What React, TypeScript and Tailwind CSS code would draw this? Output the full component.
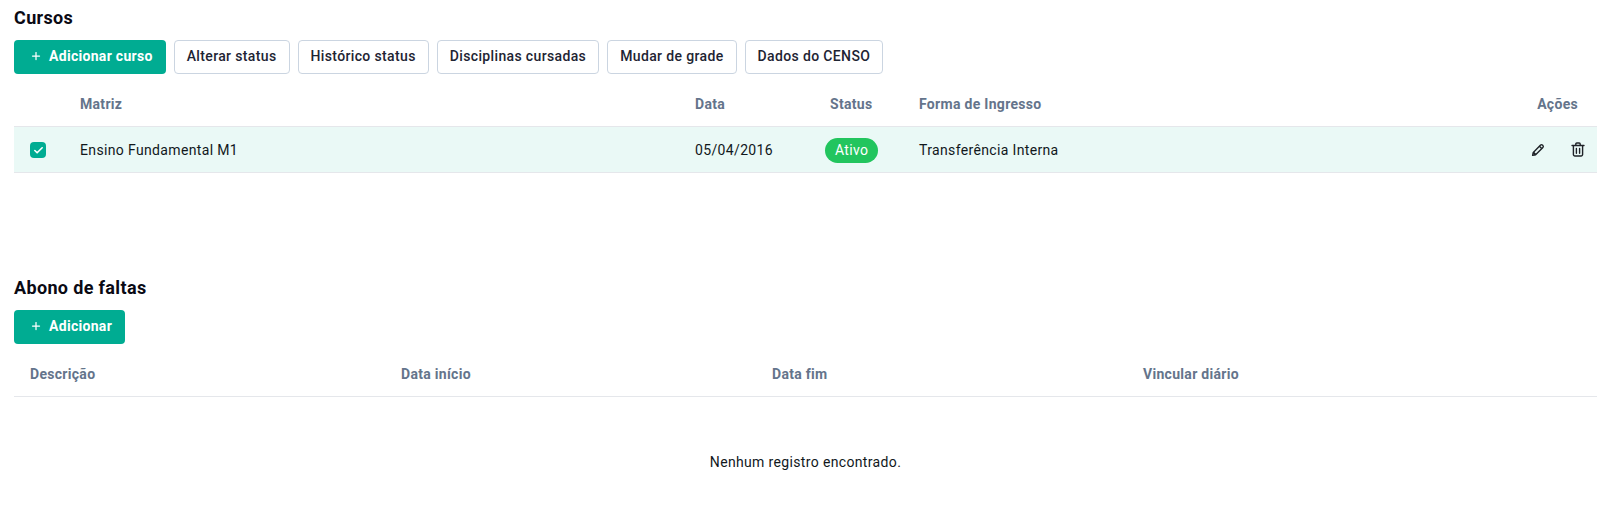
import { Check, Plus } from "lucide-react";

const actions = ["Alterar status", "Histórico status", "Disciplinas cursadas", "Mudar de grade", "Dados do CENSO"];
const absenceColumns = ["Descrição", "Data início", "Data fim", "Vincular diário"];

function AddButton({ label }: { label: string }) {
  return (
    <button className="flex h-[34px] items-center gap-[7px] rounded bg-[#00ac92] pb-[2px] pl-[16px] pr-[13px] text-sm font-bold tracking-[0.3px] text-white">
      <Plus size={12} strokeWidth={2.5} />
      {label}
    </button>
  );
}

export default function App() {
  return (
    <div className="h-[505px] bg-white px-[14px] pt-[8px] text-sm text-[#11181c] [font-family:Roboto,sans-serif]">
      {/* Cursos */}
      <h2 className="text-lg font-bold leading-[20px] tracking-[0.35px] text-[#0a0a14]">Cursos</h2>
      <div className="mt-3 flex gap-2">
        <AddButton label="Adicionar curso" />
        {actions.map((action) => (
          <button
            key={action}
            className="h-[34px] rounded border border-[#cbd5e1] bg-white px-3 pb-[2px] text-sm font-medium tracking-[0.36px] text-[#1e2433]"
          >
            {action}
          </button>
        ))}
      </div>

      <div className="mt-2">
        <div className="flex h-[45px] items-center border-b border-[#e5e7eb] text-sm font-bold tracking-[0.3px] text-[#64748b]">
          <div className="w-[66px]" />
          <div className="w-[615px]">Matriz</div>
          <div className="w-[135px]">Data</div>
          <div className="w-[89px]">Status</div>
          <div className="flex-1">Forma de Ingresso</div>
          <div className="pr-[19px]">Ações</div>
        </div>
        <div className="flex h-[46px] items-center border-b border-[#e5e7eb] bg-[#eaf9f6] tracking-[0.35px]">
          <div className="w-[66px] pl-4 pt-px">
            <span className="flex h-4 w-4 items-center justify-center rounded bg-[#00ac92] text-white">
              <Check size={11} strokeWidth={3.5} />
            </span>
          </div>
          <div className="w-[615px]">Ensino Fundamental M1</div>
          <div className="w-[130px]">05/04/2016</div>
          <div className="w-[94px] pt-px">
            <span className="inline-block rounded-full bg-[#22c55e] px-[10px] py-[3px] font-normal leading-[19px] text-white">
              Ativo
            </span>
          </div>
          <div className="flex-1">Transferência Interna</div>
          <div className="flex items-center gap-[26px] pr-[12px] text-[#1f2328]">
            <svg width="14" height="14" viewBox="0 0 14 14" fill="none" stroke="currentColor" strokeWidth="1.4" strokeLinejoin="round">
              <path d="M1.6 12.4l.7-3L9.6 2.1a1.3 1.3 0 0 1 1.8 0l.5.5a1.3 1.3 0 0 1 0 1.8L4.6 11.7z" />
              <path d="M8.4 3.3l2.3 2.3" />
              <path d="M2.3 9.4l2.3 2.3" fill="currentColor" strokeWidth="2" />
            </svg>
            <svg width="14" height="15" viewBox="0 0 14 15" fill="none" stroke="currentColor" strokeWidth="1.4" strokeLinecap="round" strokeLinejoin="round">
              <path d="M1 3.5h12" />
              <path d="M4.8 3.2V2a1 1 0 0 1 1-1h2.4a1 1 0 0 1 1 1v1.2" />
              <path d="M2.4 3.6v8.9a1.5 1.5 0 0 0 1.5 1.5h6.2a1.5 1.5 0 0 0 1.5-1.5V3.6" />
              <path d="M5.4 6.4v4.8M8.6 6.4v4.8" />
            </svg>
          </div>
        </div>
      </div>

      {/* Abono de faltas */}
      <h2 className="mt-[105px] text-lg font-bold leading-[20px] tracking-[0.35px] text-[#0a0a14]">Abono de faltas</h2>
      <div className="mt-3">
        <AddButton label="Adicionar" />
      </div>

      <div className="mt-2">
        <div className="flex h-[45px] items-center border-b border-[#e5e7eb] pl-4 text-sm font-bold tracking-[0.3px] text-[#64748b]">
          {absenceColumns.map((column) => (
            <div key={column} className="w-[371px]">
              {column}
            </div>
          ))}
        </div>
        <p className="pt-[55px] text-center tracking-[0.35px]">Nenhum registro encontrado.</p>
      </div>
    </div>
  );
}
